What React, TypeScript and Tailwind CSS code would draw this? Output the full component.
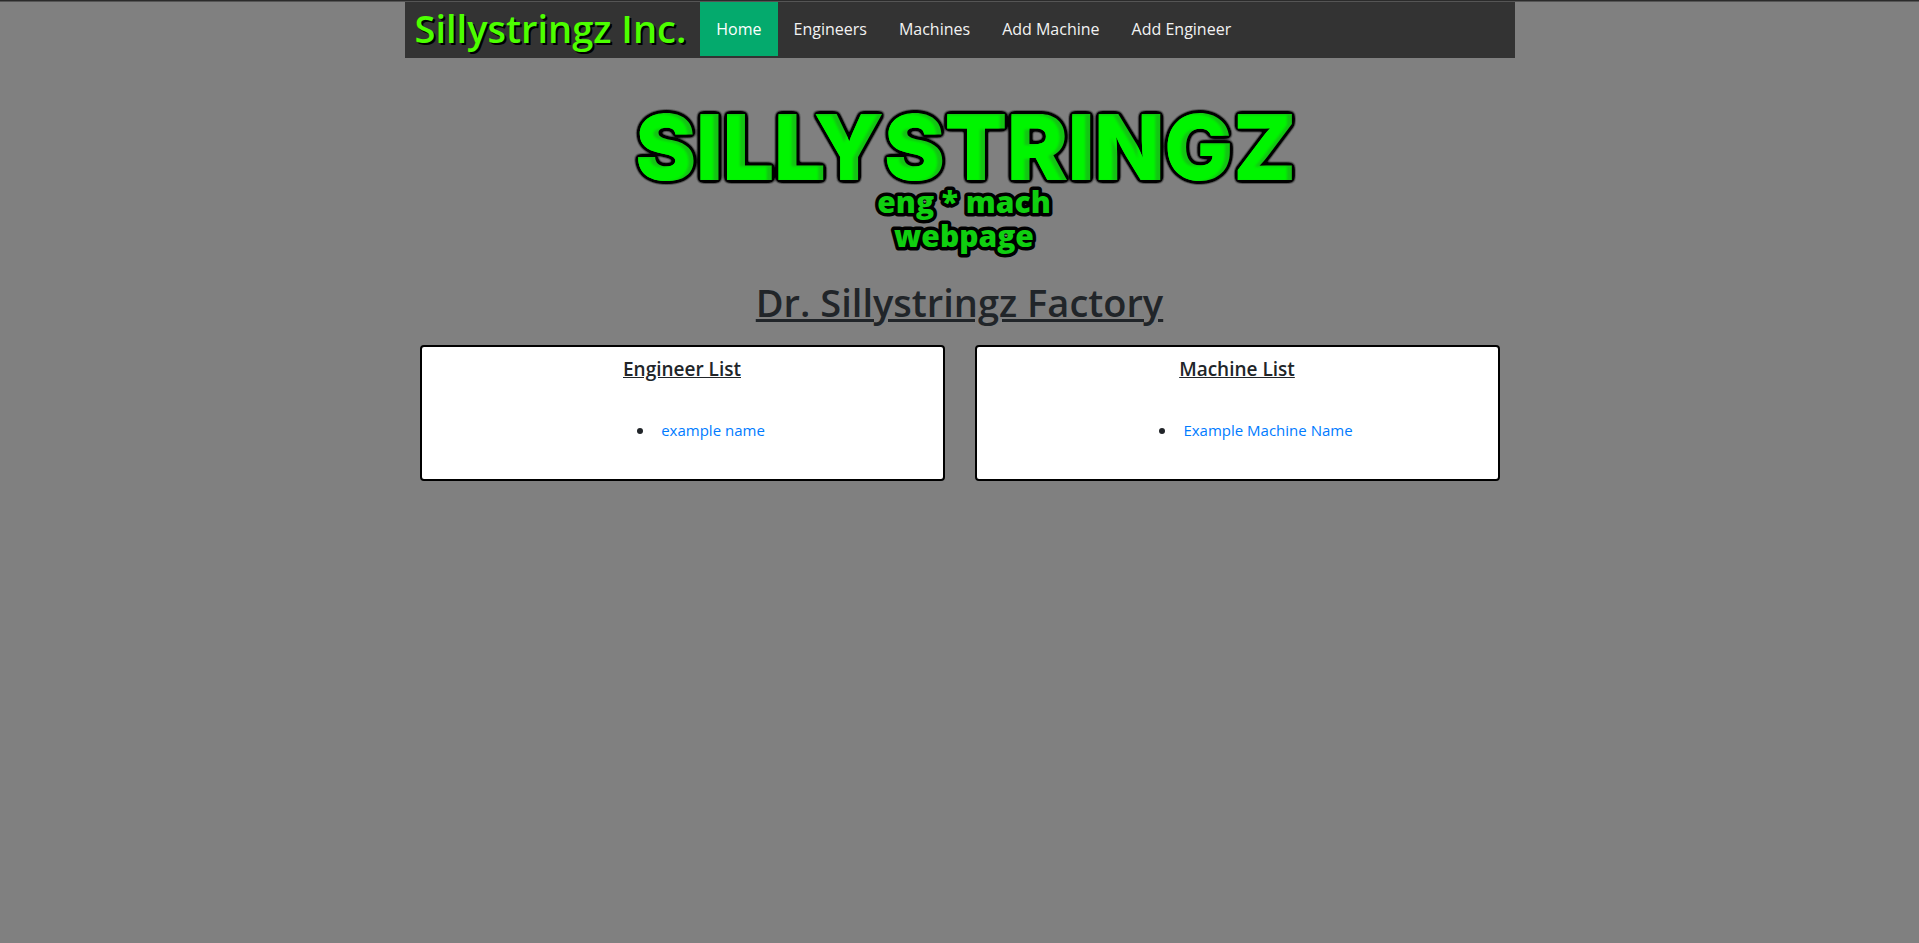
const navLinks = ["Home", "Engineers", "Machines", "Add Machine", "Add Engineer"];

const lists = [
  { title: "Engineer List", items: ["example name"] },
  { title: "Machine List", items: ["Example Machine Name"] },
];

function Logo() {
  return (
    <svg
      className="block h-[170px] w-[720px] max-w-full"
      viewBox="0 0 720 170"
      role="img"
      aria-label="Sillystringz eng * mach webpage"
      fontWeight="900"
      textAnchor="middle"
    >
      <defs>
        <filter id="bevel" x="-5%" y="-20%" width="110%" height="140%" colorInterpolationFilters="sRGB">
          <feGaussianBlur in="SourceAlpha" stdDeviation="2" result="soft" />
          <feComponentTransfer in="soft" result="grown">
            <feFuncA type="linear" slope="9" intercept="-0.1" />
          </feComponentTransfer>
          <feFlood floodColor="#000" result="black" />
          <feComposite in="black" in2="grown" operator="in" result="outline" />
          <feOffset in="SourceAlpha" dx="-5" dy="1" result="shifted" />
          <feGaussianBlur in="shifted" stdDeviation="0.8" result="shiftedSoft" />
          <feFlood floodColor="#00f500" result="light" />
          <feComposite in="light" in2="shiftedSoft" operator="in" result="lit" />
          <feComposite in="lit" in2="SourceAlpha" operator="in" result="face" />
          <feMerge>
            <feMergeNode in="outline" />
            <feMergeNode in="SourceGraphic" />
            <feMergeNode in="face" />
          </feMerge>
        </filter>
      </defs>
      <text x="366" y="82" fontSize="91" fontFamily="Inter, sans-serif" fill="#14c414" filter="url(#bevel)">
        SILLYSTRINGZ
      </text>
      <g
        fontFamily="'Open Sans', 'Noto Sans', sans-serif"
        fontSize="30"
        fill="#10cf10"
        stroke="#000"
        strokeWidth="7"
        strokeLinejoin="round"
        paintOrder="stroke"
      >
        <text x="364" y="115">eng * mach</text>
        <text x="364" y="149">webpage</text>
      </g>
    </svg>
  );
}

export default function App() {
  return (
    <div className="min-h-screen border-t border-[#2b2b2b] bg-[#808080] font-['Open_Sans','Noto_Sans',sans-serif] text-base text-[#212529]">
      <div className="border-t border-[#555]">
        <div className="mx-auto max-w-[1110px]">
          <nav className="flex h-14 items-start bg-[#333]">
            <a href="#" className="pr-3.5 pl-2.5 text-[38px] leading-[52px] font-semibold text-[#4cff00] [text-shadow:2px_2px_#000]">
              Sillystringz Inc.
            </a>
            {navLinks.map((label) => (
              <a
                key={label}
                href="#"
                className={
                  label === "Home"
                    ? "bg-[#04aa6d] px-4 leading-[54px] text-white"
                    : "px-4 leading-[54px] text-[#f2f2f2]"
                }
              >
                {label}
              </a>
            ))}
          </nav>
          <main>
            <div className="flex justify-center pt-10">
              <Logo />
            </div>
            <h1 className="pt-2 text-center text-[38px] leading-[52px] font-semibold underline">
              Dr. Sillystringz Factory
            </h1>
            <div className="grid grid-cols-2 gap-[30px] px-[15px] pt-[17px]">
              {lists.map((list) => (
                <section key={list.title} className="min-h-[136px] rounded border-2 border-black bg-white">
                  <h2 className="pt-2.5 text-center text-[19px] leading-6 font-semibold underline">{list.title}</h2>
                  <ul className="flex list-disc flex-col items-center pt-[37px] pl-14">
                    {list.items.map((item) => (
                      <li key={item} className="pl-1.5 leading-6">
                        <a href="#" className="text-[15px] text-[#007bff]">{item}</a>
                      </li>
                    ))}
                  </ul>
                </section>
              ))}
            </div>
          </main>
        </div>
      </div>
    </div>
  );
}
